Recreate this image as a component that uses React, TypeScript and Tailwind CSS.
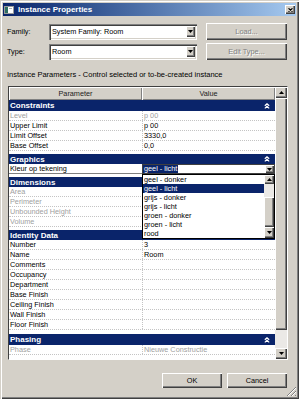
import React from "react";

const raised =
  "shadow-[inset_1px_1px_0_#ffffff,inset_-1px_-1px_0_#404040,inset_-2px_-2px_0_#808080]";
const raisedSoft = "shadow-[inset_1px_1px_0_#ffffff,inset_-1px_-1px_0_#808080]";
const sunken =
  "shadow-[inset_1px_1px_0_#808080,inset_2px_2px_0_#404040,inset_-1px_-1px_0_#ffffff,inset_-2px_-2px_0_#d4d0c8]";

function Tri({ up = false, color = "#000" }: { up?: boolean; color?: string }) {
  return (
    <svg width="5" height="3" viewBox="0 0 5 3" className="block">
      <polygon points={up ? "2.5,0 5,3 0,3" : "0,0 5,0 2.5,3"} fill={color} />
    </svg>
  );
}

function Chevrons() {
  return (
    <svg width="6" height="6" viewBox="0 0 6 6" className="block">
      <path d="M0.8 2.8 L3 0.8 L5.2 2.8 M0.8 5.4 L3 3.4 L5.2 5.4" stroke="#ffffff" strokeWidth="1.2" fill="none" />
    </svg>
  );
}

function Combo({ text }: { text: string }) {
  return (
    <div className={`w-[148px] h-[16px] bg-white ${sunken} flex items-center pl-[3px] pr-[2px]`}>
      <span className="text-[7.3px] leading-[8px] text-black flex-1 whitespace-nowrap">{text}</span>
      <div className={`w-[9px] h-[11px] bg-[#d4d0c8] ${raised} flex items-center justify-center`}>
        <Tri />
      </div>
    </div>
  );
}

function DisButton({ text }: { text: string }) {
  return (
    <div className={`ml-[9px] w-[81px] h-[17px] bg-[#d4d0c8] ${raised} flex items-center justify-center`}>
      <span className="text-[7.3px] leading-[8px] text-[#808080] [text-shadow:1px_1px_0_#ffffff]">{text}</span>
    </div>
  );
}

function Band({ title, gap, h }: { title: string; gap: number; h: number }) {
  return (
    <div
      className={`${gap === 0 ? "" : gap === 3 ? "mt-[3px]" : "mt-[4px]"} ${h === 11 ? "h-[11px]" : "h-[10px]"} bg-[#0a246a] flex items-center justify-between pl-[1px] pr-[5px] shrink-0`}
    >
      <span className="text-white font-bold text-[8px] leading-[9px] whitespace-nowrap">{title}</span>
      <Chevrons />
    </div>
  );
}

function Row({ name, value = "", dis = false, vdis = false }: { name: string; value?: string; dis?: boolean; vdis?: boolean }) {
  return (
    <div className="h-[10px] flex border-b border-dotted border-[#c4c4c4] shrink-0">
      <div className={`w-[133px] pl-[1px] text-[7.3px] leading-[9px] whitespace-nowrap ${dis ? "text-[#a0a0a0]" : "text-black"}`}>
        {name}
      </div>
      <div
        className={`flex-1 border-l border-dotted border-[#c4c4c4] pl-[1px] text-[7.3px] leading-[9px] whitespace-nowrap ${vdis ? "text-[#a0a0a0]" : "text-black"}`}
      >
        {value}
      </div>
    </div>
  );
}

function KleurRow() {
  return (
    <div className="h-[10px] flex shrink-0">
      <div className="w-[133px] pl-[1px] text-[7.3px] leading-[9px] whitespace-nowrap text-black border-b border-[#808080]">
        Kleur op tekening
      </div>
      <div className="flex-1 border border-[#404040] bg-white flex items-center">
        <span className="bg-[#0a246a] text-white text-[7.3px] leading-[8px] pl-[1px] pr-[1px] whitespace-nowrap">geel - licht</span>
        <div className={`ml-auto w-[9px] h-[8px] bg-[#d4d0c8] ${raised} flex items-center justify-center`}>
          <Tri />
        </div>
      </div>
    </div>
  );
}

const listItems = ["geel - donker", "geel - licht", "grijs - donker", "grijs - licht", "groen - donker", "groen - licht", "rood"];

function DropList() {
  return (
    <div className="absolute left-[133px] top-[87px] w-[133px] bg-white border border-black flex">
      <div className="flex-1 flex flex-col">
        {listItems.map((it) => (
          <div
            key={it}
            className={`h-[9px] leading-[9px] pl-[1px] text-[7.3px] whitespace-nowrap ${it === "geel - licht" ? "bg-[#0a246a] text-white" : "text-black"}`}
          >
            {it}
          </div>
        ))}
      </div>
      <div className="w-[10px] flex flex-col">
        <div className={`h-[9px] bg-[#d4d0c8] ${raised} flex items-center justify-center`}>
          <Tri up />
        </div>
        <div className="h-[13px] bg-[#ebe9e6]" />
        <div className={`h-[30px] bg-[#d4d0c8] ${raised}`} />
        <div className={`h-[11px] bg-[#d4d0c8] ${raised} flex items-center justify-center`}>
          <Tri />
        </div>
      </div>
    </div>
  );
}

function Grid() {
  return (
    <div className="ml-[1px] mt-[7px] w-[280px] h-[274px] border border-t-[#404040] border-l-[#404040] border-r-white border-b-white flex relative">
      <div className="w-[266px] flex flex-col bg-white">
        <div className="h-[13px] flex shrink-0 bg-[#d4d0c8]">
          <div className={`w-[133px] ${raisedSoft} flex items-center justify-center text-[7.3px] leading-[8px] text-[#222]`}>Parameter</div>
          <div className={`flex-1 ${raisedSoft} flex items-center justify-center text-[7.3px] leading-[8px] text-[#222]`}>Value</div>
        </div>
        <Band title="Constraints" gap={0} h={11} />
        <Row name="Level" value="p 00" dis vdis />
        <Row name="Upper Limit" value="p 00" />
        <Row name="Limit Offset" value="3330,0" />
        <Row name="Base Offset" value="0,0" />
        <Band title="Graphics" gap={3} h={10} />
        <KleurRow />
        <Band title="Dimensions" gap={3} h={10} />
        <Row name="Area" dis />
        <Row name="Perimeter" dis />
        <Row name="Unbounded Height" dis />
        <Row name="Volume" dis />
        <Band title="Identity Data" gap={3} h={10} />
        <Row name="Number" value="3" />
        <Row name="Name" value="Room" />
        <Row name="Comments" />
        <Row name="Occupancy" />
        <Row name="Department" />
        <Row name="Base Finish" />
        <Row name="Ceiling Finish" />
        <Row name="Wall Finish" />
        <Row name="Floor Finish" />
        <Band title="Phasing" gap={4} h={11} />
        <Row name="Phase" value="Nieuwe Constructie" dis vdis />
      </div>
      <div className="w-[12px] flex flex-col bg-[#d4d0c8]">
        <div className={`h-[11px] ${raised} flex items-center justify-center`}>
          <Tri up />
        </div>
        <div className={`h-[232px] ${raised}`} />
        <div className="flex-1 bg-[#ebe9e6]" />
        <div className={`h-[11px] ${raised} flex items-center justify-center`}>
          <Tri />
        </div>
      </div>
      <DropList />
    </div>
  );
}

export default function App() {
  return (
    <div className="w-[301px] h-[400px] bg-white relative overflow-hidden font-['Liberation_Sans',Arial,sans-serif]">
      <div className="w-[299px] h-[399px] bg-[#d4d0c8] shadow-[inset_1px_1px_0_#d4d0c8,inset_2px_2px_0_#ffffff,inset_-1px_-1px_0_#404040,inset_-2px_-2px_0_#808080] flex flex-col relative">
        {/* Title bar */}
        <div className="mx-[3px] mt-[3px] h-[13px] bg-linear-to-r from-[#0a246a] to-[#a6caf0] flex items-center shrink-0">
          <svg width="10" height="8" viewBox="0 0 10 8" className="block ml-[1px]">
            <rect x="0.5" y="0.5" width="9" height="7" fill="#ffffff" stroke="#9a9a9a" />
            <rect x="1" y="1" width="3" height="6" fill="#2f6f62" />
            <rect x="5" y="2" width="3" height="1" fill="#b0b0b0" />
          </svg>
          <span className="ml-[4px] text-white font-bold text-[8px] leading-[9px] whitespace-nowrap">Instance Properties</span>
          <div className={`ml-auto mr-[1px] w-[10px] h-[9px] bg-[#d4d0c8] ${raised} flex items-center justify-center`}>
            <svg width="5" height="4" viewBox="0 0 5 4" className="block">
              <path d="M0.5 0.3 L4.5 3.7 M4.5 0.3 L0.5 3.7" stroke="#000" strokeWidth="1.1" />
            </svg>
          </div>
        </div>

        {/* Content */}
        <div className="pl-[7px] pt-[7px] flex flex-col">
          <div className="flex items-center h-[17px]">
            <span className="w-[42px] text-[7.3px] leading-[8px] text-black">Family:</span>
            <Combo text="System Family: Room" />
            <DisButton text="Load..." />
          </div>
          <div className="flex items-center h-[17px] mt-[3px]">
            <span className="w-[42px] text-[7.3px] leading-[8px] text-black">Type:</span>
            <Combo text="Room" />
            <DisButton text="Edit Type..." />
          </div>
          <div className="mt-[11px] text-[7.5px] leading-[8px] text-black whitespace-nowrap">
            Instance Parameters - Control selected or to-be-created instance
          </div>
          <Grid />
          <div className="flex mt-[13px]">
            <div className={`ml-[155px] w-[60px] h-[15px] bg-[#d4d0c8] ${raised} flex items-center justify-center text-[7.3px] leading-[8px] text-black`}>
              OK
            </div>
            <div className={`ml-[5px] w-[60px] h-[15px] bg-[#d4d0c8] ${raised} flex items-center justify-center text-[7.3px] leading-[8px] text-black`}>
              Cancel
            </div>
          </div>
        </div>

        {/* Resize grip */}
        <svg width="11" height="11" viewBox="0 0 11 11" className="absolute left-[286px] top-[386px]">
          <path d="M10 1 L1 10 M10 5 L5 10 M10 9 L9 10" stroke="#808080" strokeWidth="1" />
          <path d="M10 2 L2 10 M10 6 L6 10" stroke="#ffffff" strokeWidth="1" />
        </svg>
      </div>
    </div>
  );
}
